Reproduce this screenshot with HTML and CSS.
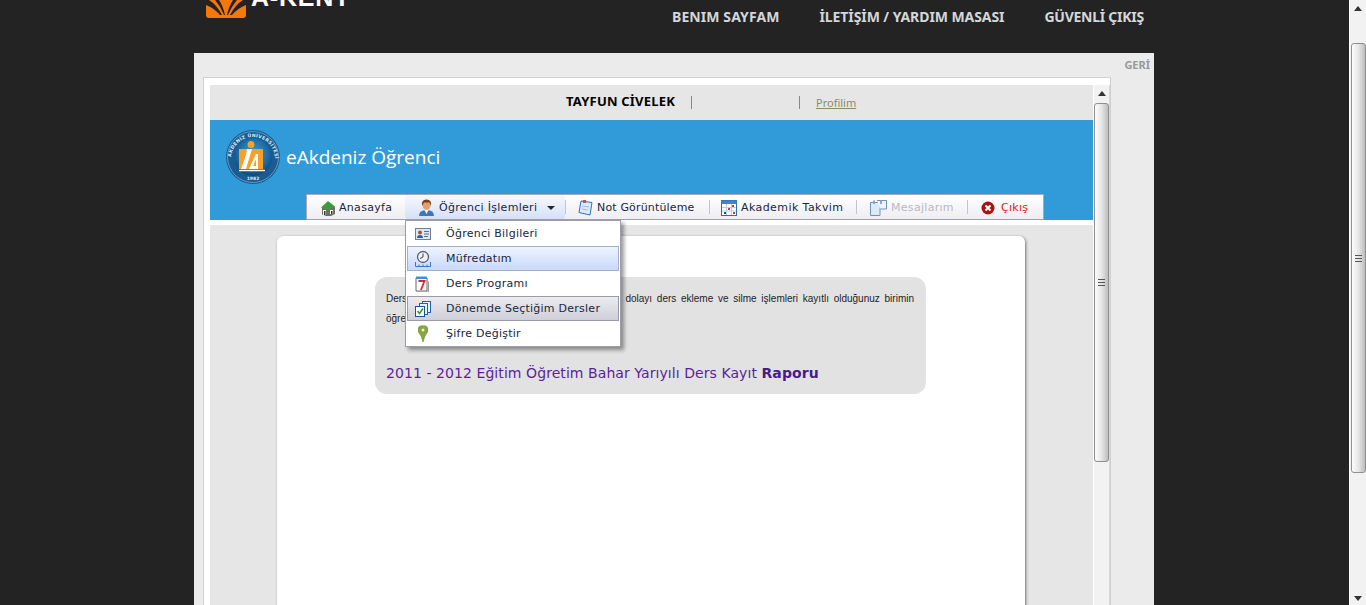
FILE: index.html
```html
<!DOCTYPE html>
<html lang="tr">
<head>
<meta charset="utf-8">
<title>eAkdeniz Öğrenci</title>
<link rel="stylesheet" href="styles.css">
</head>
<body>
<div class="main">
  <div class="wrap">
    <header class="site-head">
      <div class="brand">
        <svg class="brand-mark" width="40" height="18" viewBox="0 0 40 18">
          <path d="M0 0H40V15Q40 18 37 18H3Q0 18 0 15Z" fill="#f7780a"/>
          <path d="M3 0Q11 5 16 15L14 15Q8 8 0 5V0ZM13 0Q17 6 19 15H18Q15 7 9 0ZM27 0Q23 6 21 15H22Q25 7 31 0ZM37 0Q29 5 24 15L26 15Q32 8 40 5V0Z" fill="#232323"/>
        </svg>
        <span class="brand-name">A-KENT</span>
      </div>
      <nav class="site-nav">
        <a class="nav-first">BENIM SAYFAM</a>
        <a class="nav-mid">İLETİŞİM / YARDIM MASASI</a>
        <a class="nav-last">GÜVENLİ ÇIKIŞ</a>
      </nav>
    </header>
    <section class="panel">
      <div class="panel-head">GERİ</div>
      <div class="frame">
        <div class="frame-content">
          <div class="user-row">
            <span class="user-name">TAYFUN CİVELEK</span>
            <span class="user-blank"></span>
            <a class="user-link">Profilim</a>
          </div>
          <div class="banner">
            <div class="banner-top">
              <svg class="uni-logo" width="56" height="56" viewBox="0 0 56 56">
                <defs>
                  <radialGradient id="uniBg" cx=".5" cy=".42" r=".6">
                    <stop offset="0" stop-color="#3f9fd8"/>
                    <stop offset=".65" stop-color="#1c6ca8"/>
                    <stop offset="1" stop-color="#12436f"/>
                  </radialGradient>
                  <path id="uniArc" d="M6 30A22 22 0 0 1 50 30"/>
                </defs>
                <circle cx="28" cy="28" r="27" fill="#1a5c92"/>
                <circle cx="28" cy="28" r="25.5" fill="none" stroke="#8ec3e6" stroke-width=".6"/>
                <circle cx="28" cy="28" r="19" fill="url(#uniBg)"/>
                <text class="uni-ring"><textPath href="#uniArc" startOffset="2">AKDENİZ ÜNİVERSİTESİ</textPath></text>
                <text class="uni-year" x="28" y="51" text-anchor="middle">1982</text>
                <circle cx="26" cy="15.500" r="3.500" fill="#f6a028"/>
                <rect x="14" y="20" width="24" height="20" fill="#f6a028"/>
                <path d="M22 20H27L21 40H16L21 26ZM31 25L33 25V40H24ZM31 30L28 37H31Z" fill="#fff"/>
                <path d="M14 41.500H40" stroke="#fff" stroke-width="1.500"/>
              </svg>
              <h1 class="banner-title">eAkdeniz Öğrenci</h1>
            </div>
            <div class="menu-bar">
              <a class="menu-item item-home">
                <svg width="16" height="16" viewBox="0 0 16 16"><path d="M2 8V14.500L6 16H11L15 14V7L8 3Z" fill="#6f6f62"/><path d="M1 7.500L8 1L15 6.500L9 10Z" fill="#3d9c3a"/><path d="M3 10H6V15H3ZM10 10H13V14H10Z" fill="#fff"/><path d="M4 11H5.500V15H4ZM11 11H12.500V14H11Z" fill="#333"/></svg>
                Anasayfa
              </a>
              <div class="menu-item item-active">
                <svg width="17" height="18" viewBox="0 0 17 18"><path d="M1 17Q1 11 8.500 11Q16 11 16 17Z" fill="#3f74c0"/><path d="M6.500 11L8.500 15L10.500 11Z" fill="#fff"/><ellipse cx="8.500" cy="6" rx="4" ry="5" fill="#e0a268"/><path d="M4 7Q3 .5 8.500 .5Q14 .5 13 7L11.500 3.500H6Z" fill="#7a3f14"/></svg>
                Öğrenci İşlemleri
                <span class="caret"></span>
                <div class="dropdown">
                  <a class="drop-row">
                    <svg width="16" height="12" viewBox="0 0 16 12"><rect x=".5" y=".5" width="15" height="11" fill="#dfe8f5" stroke="#6f7f99"/><circle cx="5" cy="4.500" r="2" fill="#9b5a2a"/><path d="M2 10Q2 7 5 7Q8 7 8 10Z" fill="#2f5fa8"/><path d="M9 3.500H14M9 6H14M9 8.500H13" stroke="#5a6f90"/></svg>
                    Öğrenci Bilgileri
                  </a>
                  <a class="drop-row row-hover">
                    <svg width="16" height="17" viewBox="0 0 16 17"><circle cx="8" cy="6.500" r="5.500" fill="#eef1f6" stroke="#5b6270" stroke-width="1.300"/><path d="M8 3V6.500L5 8" fill="none" stroke="#444"/><path d="M.5 11.500V16H15.500V11.500M4 14V16M8 14V16M12 14V16" fill="none" stroke="#3f73c4"/></svg>
                    Müfredatım
                  </a>
                  <a class="drop-row">
                    <svg width="14" height="16" viewBox="0 0 14 16"><path d="M1 2H12V15H1Z" fill="#fff" stroke="#666"/><path d="M12 5L13.500 6V16H3" fill="none" stroke="#999"/><path d="M1 .5H12V3H1Z" fill="#3d8ede"/><path d="M3.500 5H9.500L6 14" fill="none" stroke="#d62a2a" stroke-width="1.800"/></svg>
                    Ders Programı
                  </a>
                  <a class="drop-row row-selected">
                    <svg width="16" height="16" viewBox="0 0 16 16"><rect x="7.500" y=".5" width="8" height="11" fill="#e9f0fb" stroke="#2a5ea8"/><rect x="4.500" y="2.500" width="8" height="11" fill="#e9f0fb" stroke="#2a5ea8"/><rect x=".5" y="5.500" width="9" height="10" fill="#fff" stroke="#1f4f96"/><path d="M2.500 10L4.500 12.500L8 7.500" fill="none" stroke="#2f9a2f" stroke-width="1.500"/></svg>
                    Dönemde Seçtiğim Dersler
                  </a>
                  <a class="drop-row">
                    <svg class="pin" width="10" height="17" viewBox="0 0 10 17"><path d="M5 16.500Q3.500 10 1.500 8A5 5 0 1 1 8.500 8Q6.500 10 5 16.500Z" fill="#86a83c" stroke="#5e7d24" stroke-width=".6"/><circle cx="5" cy="4.500" r="1.500" fill="#eef5cf"/></svg>
                    Şifre Değiştir
                  </a>
                </div>
              </div>
              <a class="menu-item item-notes">
                <svg width="15" height="17" viewBox="0 0 15 17"><path d="M3 2L14 3.500L12 16L1 13.500Z" fill="#dcebfb" stroke="#2f6fc0"/><path d="M5 1H8V4H5Z" fill="#d44"/><path d="M4.500 7L11 8M4 10L10 11" stroke="#9fb9d8"/></svg>
                Not Görüntüleme
              </a>
              <a class="menu-item item-cal">
                <svg width="16" height="16" viewBox="0 0 16 16"><rect x=".5" y=".5" width="15" height="15" fill="#fff" stroke="#2d6fb5"/><path d="M.5 .5H15.500V4H.5Z" fill="#3d86cf"/><path d="M1 7.500H15M1 11H15M5.500 4V15M10.500 4V15" stroke="#b5d0ec"/><rect x="7" y="8" width="2" height="2" fill="#d33"/><rect x="11" y="5" width="2" height="2" fill="#d33"/><rect x="3" y="12" width="2" height="2" fill="#444"/><rect x="12" y="12" width="2" height="2" fill="#d33"/></svg>
                Akademik Takvim
              </a>
              <a class="menu-item item-msg">
                <svg width="17" height="16" viewBox="0 0 17 16"><path d="M.5 2.500H10V15.500H.5Z" fill="#dce9f7" stroke="#6d94bf"/><path d="M7 .5H16.500V9H10" fill="#eef4fb" stroke="#6d94bf"/><path d="M3 .5H5V4H3ZM10 .5H12V4H10Z" fill="#8aa8c8"/></svg>
                Mesajlarım
              </a>
              <a class="menu-item item-exit">
                <svg width="14" height="14" viewBox="0 0 14 14"><circle cx="7" cy="7" r="6.500" fill="#a81414"/><path d="M4.500 4.500L9.500 9.500M9.500 4.500L4.500 9.500" stroke="#fff" stroke-width="2"/></svg>
                <span>Çıkış</span>
              </a>
            </div>
          </div>
          <div class="content">
            <div class="card">
              <div class="notice">
                <p class="notice-line first">Ders kayıt ekleme işlemleri süresi sona erdiğinden dolayı ders ekleme ve silme işlemleri kayıtlı olduğunuz birimin</p>
                <p class="notice-line">öğrenci işleri bürosu tarafından yapılmaktadır.</p>
                <a class="report">2011 - 2012 Eğitim Öğretim Bahar Yarıyılı Ders Kayıt <b>Raporu</b></a>
              </div>
            </div>
          </div>
        </div>
        <div class="scroll scroll-inner">
          <span class="arrow-up"></span>
          <span class="thumb thumb-inner"><i class="grip"></i></span>
        </div>
      </div>
    </section>
  </div>
</div>
<div class="scroll scroll-outer">
  <span class="arrow-up"></span>
  <span class="thumb thumb-outer"><i class="grip"></i></span>
  <span class="arrow-down"></span>
</div>
</body>
</html>
```
FILE: styles.css
```css
* { box-sizing: border-box; }
html, body { margin: 0; height: 100%; overflow: hidden; }
body { display: flex; background: #232323; font-family: "DejaVu Sans", Verdana, sans-serif; }
a { display: block; }
.main { flex: 1; min-width: 0; padding-left: 194px; }
.wrap { width: 960px; }

.site-head { height: 53px; display: flex; justify-content: space-between; overflow: hidden; }
.brand { height: 18px; margin-left: 12px; display: flex; overflow: hidden; }
.brand-mark { flex: none; }
.brand-name { margin: -18px 0 0 5px; font: bold 25px/30px "Liberation Sans", sans-serif; color: #fff; letter-spacing: .8px; white-space: nowrap; }
.site-nav { display: flex; gap: 40px; padding: 8px 10px 0 0; height: 34px; font: bold 14px/18px "Noto Sans", sans-serif; color: #d3d7da; }
.site-nav a { white-space: nowrap; }
.nav-first { letter-spacing: .08px; }
.nav-mid { letter-spacing: -.08px; }
.nav-last { letter-spacing: -.25px; }

.panel { background: #ebebeb; padding: 0 43px 0 9px; height: 600px; }
.panel-head { height: 24px; margin-right: -39px; text-align: right; font: bold 11px/23px "Noto Sans", sans-serif; color: #999; }
.frame { display: flex; height: 560px; background: #fff; border: 1px solid #d0d0d0; padding: 7px 0 0 6px; }
.frame-content { width: 883px; flex: none; }

.user-row { height: 35px; background: #e6e6e6; display: flex; align-items: center; padding-left: 356px; font-family: "Noto Sans", sans-serif; }
.user-name { width: 126px; height: 13px; font-weight: bold; font-size: 13px; letter-spacing: .2px; color: #000; border-right: 1px solid #888; line-height: 11px; white-space: nowrap; }
.user-blank { width: 108px; height: 13px; border-right: 1px solid #888; }
.user-link { margin-left: 16px; font-size: 11px; color: #8b8b70; text-decoration: underline; }

.banner { height: 100px; background: #319bd9; display: flex; flex-direction: column; justify-content: space-between; }
.banner-top { display: flex; align-items: center; padding: 9px 0 0 15px; gap: 5px; }
.uni-logo { flex: none; }
.uni-ring { font: bold 4.600px "DejaVu Sans", sans-serif; fill: #dcecf7; letter-spacing: .3px; }
.uni-year { font: bold 4.500px "DejaVu Sans", sans-serif; fill: #dcecf7; }
.banner-title { margin: 0; font: normal 19px/28px "Open Sans", sans-serif; color: #fff; }

.menu-bar { margin-left: 96px; width: 738px; height: 26px; display: flex; align-items: stretch; background: linear-gradient(#fff, #eeeef3); border: 1px solid #a9a9b5; border-bottom-color: #a0a0ac; font-size: 11px; line-height: 24px; letter-spacing: .3px; color: #20263c; }
.menu-item { display: flex; align-items: center; gap: 4px; padding-top: 1px; white-space: nowrap; position: relative; }
.menu-item + .menu-item::before { content: ""; position: absolute; left: 0; top: 5px; height: 14px; width: 1px; background: #c4c4cc; }
.item-home { width: 98px; padding-left: 13px; gap: 3px; }
.item-active { width: 160px; padding-left: 13px; border-radius: 3px; background: linear-gradient(#f6f8fe, #d6e0f7); }
.item-active::before { display: none; }
.item-notes { width: 144px; padding-left: 13px; letter-spacing: .16px; }
.item-cal { width: 147px; padding-left: 12px; letter-spacing: .42px; }
.item-msg { width: 111px; padding-left: 14px; color: #b8b8c2; }
.item-exit { padding-left: 14px; gap: 6px; color: #e8180c; }
.caret { margin-left: 6px; border: 4px solid transparent; border-top-color: #20263c; border-bottom: 0; }

.dropdown { position: absolute; left: 0; top: 25px; width: 216px; height: 127px; background: #fff; border: 1px solid #9c9cac; box-shadow: 3px 3px 4px rgba(0,0,0,.4); z-index: 5; color: #20263c; letter-spacing: .25px; }
.drop-row { position: relative; height: 25px; margin: 0 1px; display: flex; align-items: center; padding-left: 39px; line-height: 23px; }
.drop-row svg { position: absolute; left: 8px; top: 50%; transform: translateY(-50%); }
.drop-row .pin { left: 11px; }
.row-hover { border: 1px solid #a6afc9; background: linear-gradient(#eef3fe, #c9d9fb); padding-left: 38px; }
.row-hover svg, .row-selected svg { left: 7px; }
.row-selected { border: 1px solid #9a9aa8; background: linear-gradient(#ebebf0, #cfcfd9); padding-left: 38px; }

.content { height: 420px; margin-top: 5px; background: #e6e6e6; padding: 11px 0 0 67px; box-shadow: 0 -5px 0 #fff; }
.card { width: 748px; height: 420px; background: #fff; border-radius: 6px; box-shadow: 1px 1px 3px rgba(0,0,0,.5); padding: 41px 0 0 98px; }
.notice { width: 551px; height: 117px; background: #e2e2e2; border-radius: 12px; padding: 12px 12px 0 11px; }
.notice-line { margin: 0; font: 10px/20px "Liberation Sans", Arial, sans-serif; color: #222; }
.notice-line.first { text-align: justify; text-align-last: justify; }
.report { margin-top: 34px; font-size: 14px; letter-spacing: .07px; line-height: 20px; color: #5b1f9c; white-space: nowrap; }
.report b { color: #4a1a8c; }

.scroll { flex: none; width: 17px; background: #f2f2f2; position: relative; border-left: 1px solid #fff; }
.scroll-inner { border-right: 1px solid #d8d8d8; width: 17px; }
.scroll-outer { height: 100%; }
.thumb { position: absolute; left: 1px; width: 15px; background: linear-gradient(90deg, #fdfdfd, #e6e6e6 50%, #bdbdbd); border: 1px solid #8f8f8f; border-radius: 3px; display: flex; align-items: center; justify-content: center; }
.scroll-inner .thumb { left: 0; }
.thumb-inner { top: 18px; height: 359px; }
.thumb-outer { top: 43px; height: 430px; }
.grip { display: block; width: 7px; height: 7px; background: repeating-linear-gradient(#555 0 1px, transparent 1px 3px); }
.arrow-up, .arrow-down { position: absolute; left: 4px; border: 4px solid transparent; }
.arrow-up { top: 6px; border-top: 0; border-bottom: 5px solid #333; }
.arrow-down { bottom: 4px; border-bottom: 0; border-top: 5px solid #333; }
```
